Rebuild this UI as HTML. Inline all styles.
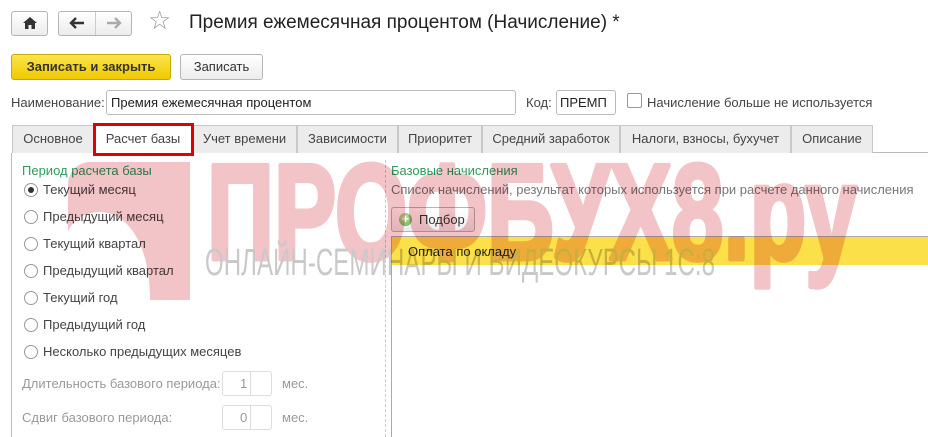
<!DOCTYPE html>
<html><head><meta charset="utf-8"><style>
*{box-sizing:border-box;margin:0;padding:0}
body{width:928px;height:437px;background:#fff;font-family:"Liberation Sans",Arial,sans-serif;font-size:13px;color:#4a4a4a;position:relative;overflow:hidden}
.a{position:absolute;white-space:nowrap}
.btn{position:absolute;border:1px solid #b5b5b5;border-radius:3px;background:linear-gradient(#fff,#ececec);}
.tab{position:absolute;top:125px;height:28px;border:1px solid #c8c8c8;border-bottom:none;background:#ececec;color:#444;font-size:13px;text-align:center;line-height:26px}
.radio{position:absolute;left:24px;width:14px;height:14px;border:1px solid #999;border-radius:50%;background:#fff}
.rl{position:absolute;left:43px;font-size:13px;color:#444}
.in{position:absolute;border:1px solid #bbb;border-radius:3px;background:#fff}
</style></head><body>
<div class="btn" style="left:11px;top:11px;width:37px;height:25px"></div>
<svg class="a" style="left:22px;top:16px" width="16" height="14" viewBox="0 0 16 14"><path d="M8 1 L1 7 H3 V13 H6.5 V9 H9.5 V13 H13 V7 H15 Z" fill="#333"/></svg>
<div class="btn" style="left:58px;top:11px;width:74px;height:25px"></div>
<div class="a" style="left:95px;top:12px;width:1px;height:23px;background:#ccc"></div>
<svg class="a" style="left:67px;top:16px" width="20" height="14"><path d="M17 7H4M9 2L4 7L9 12" stroke="#333" stroke-width="2.4" fill="none"/></svg>
<svg class="a" style="left:104px;top:16px" width="20" height="14"><path d="M3 7H16M11 2L16 7L11 12" stroke="#aaa" stroke-width="2.4" fill="none"/></svg>
<div class="a" style="left:148px;top:5px;font-size:26px;color:#999">☆</div>
<div class="a" style="left:189px;top:12px;font-size:19px;color:#222">Премия ежемесячная процентом (Начисление) *</div>
<div class="a" style="left:11px;top:54px;width:160px;height:26px;border:1px solid #c9a800;border-radius:3px;background:linear-gradient(#fbe54c,#f1c900);font-weight:bold;font-size:13px;color:#333;text-align:center;line-height:24px">Записать и закрыть</div>
<div class="btn" style="left:180px;top:54px;width:83px;height:26px;text-align:center;line-height:24px;color:#333">Записать</div>
<div class="a" style="left:11px;top:95px;color:#444">Наименование:</div>
<div class="in" style="left:106px;top:90px;width:410px;height:25px"></div>
<div class="a" style="left:111px;top:95px;color:#222">Премия ежемесячная процентом</div>
<div class="a" style="left:526px;top:95px;color:#444">Код:</div>
<div class="in" style="left:556px;top:90px;width:60px;height:25px"></div>
<div class="a" style="left:560px;top:95px;color:#222">ПРЕМП</div>
<div class="a" style="left:627px;top:93px;width:15px;height:15px;border:1px solid #999;border-radius:2px"></div>
<div class="a" style="left:647px;top:95px;color:#444">Начисление больше не используется</div>
<div class="a" style="left:12px;top:152px;width:916px;height:1px;background:#bbb"></div>
<div class="tab" style="left:12px;width:82px">Основное</div>
<div class="tab" style="left:94px;width:98px;background:#fff;height:29px">Расчет базы</div>
<div class="tab" style="left:192px;width:105px">Учет времени</div>
<div class="tab" style="left:297px;width:101px">Зависимости</div>
<div class="tab" style="left:398px;width:84px">Приоритет</div>
<div class="tab" style="left:482px;width:138px">Средний заработок</div>
<div class="tab" style="left:620px;width:171px">Налоги, взносы, бухучет</div>
<div class="tab" style="left:791px;width:82px">Описание</div>
<div class="a" style="left:93px;top:123px;width:101px;height:33px;border:3px solid #e00000"></div>
<div class="a" style="left:11px;top:153px;width:1px;height:284px;background:#bbb"></div>
<div class="a" style="left:22px;top:163px;color:#2e9c5e">Период расчета базы</div>
<div class="radio" style="top:183px"></div><div class="a" style="left:28px;top:187px;width:6px;height:6px;border-radius:50%;background:#333"></div>
<div class="rl" style="top:182px">Текущий месяц</div>
<div class="radio" style="top:210px"></div><div class="rl" style="top:209px">Предыдущий месяц</div>
<div class="radio" style="top:237px"></div><div class="rl" style="top:236px">Текущий квартал</div>
<div class="radio" style="top:264px"></div><div class="rl" style="top:263px">Предыдущий квартал</div>
<div class="radio" style="top:291px"></div><div class="rl" style="top:290px">Текущий год</div>
<div class="radio" style="top:318px"></div><div class="rl" style="top:317px">Предыдущий год</div>
<div class="radio" style="top:345px"></div><div class="rl" style="top:344px">Несколько предыдущих месяцев</div>
<div class="a" style="left:22px;top:376px;color:#999">Длительность базового периода:</div>
<div class="in" style="left:222px;top:371px;width:50px;height:25px;border-color:#ddd"></div>
<div class="a" style="left:240px;top:376px;color:#999">1</div>
<div class="a" style="left:250px;top:372px;width:1px;height:23px;background:#ddd"></div>
<div class="a" style="left:282px;top:376px;color:#999">мес.</div>
<div class="a" style="left:22px;top:410px;color:#999">Сдвиг базового периода:</div>
<div class="in" style="left:222px;top:405px;width:50px;height:25px;border-color:#ddd"></div>
<div class="a" style="left:240px;top:410px;color:#999">0</div>
<div class="a" style="left:250px;top:406px;width:1px;height:23px;background:#ddd"></div>
<div class="a" style="left:282px;top:410px;color:#999">мес.</div>
<div class="a" style="left:385px;top:160px;width:0;height:277px;border-left:1px dashed #ccc"></div>
<div class="a" style="left:391px;top:163px;color:#2e9c5e">Базовые начисления</div>
<div class="a" style="left:391px;top:182px;color:#777">Список начислений, результат которых используется при расчете данного начисления</div>
<div class="btn" style="left:391px;top:207px;width:84px;height:25px"></div>
<div class="a" style="left:399px;top:213px;width:13px;height:13px;border-radius:50%;background:radial-gradient(circle at 40% 35%,#c8eab0,#5aa83a);color:#fff;font-size:12px;line-height:12px;text-align:center;font-weight:bold">+</div>
<div class="a" style="left:419px;top:212px;color:#333">Подбор</div>
<div class="a" style="left:391px;top:236px;width:537px;height:201px;border:1px solid #aaa;border-right:none;border-bottom:none"></div>
<div class="a" style="left:392px;top:237px;width:536px;height:28px;background:#fbe04a"></div>
<div class="a" style="left:408px;top:244px;color:#222">Оплата по окладу</div>
<svg class="a" style="left:0;top:0;mix-blend-mode:multiply" width="928" height="437">
<path d="M90 162 H190 V300 H150 C150 240 125 212 100 212 C85 212 72 220 68 232 V185 C68 172 78 162 90 162 Z" fill="#f2c3c7"/>
<text x="207" y="259" font-family="Liberation Sans,sans-serif" font-weight="bold" font-size="136" textLength="650" lengthAdjust="spacingAndGlyphs" fill="#f2c3c7" stroke="#f2c3c7" stroke-width="5" stroke-linejoin="round">ПРОФБУХ8.ру</text>
<text x="205" y="275" font-family="Liberation Sans,sans-serif" font-size="38" textLength="510" lengthAdjust="spacingAndGlyphs" fill="#c9c9c9">ОНЛАЙН-СЕМИНАРЫ И ВИДЕОКУРСЫ 1С:8</text>
</svg>
</body></html>
